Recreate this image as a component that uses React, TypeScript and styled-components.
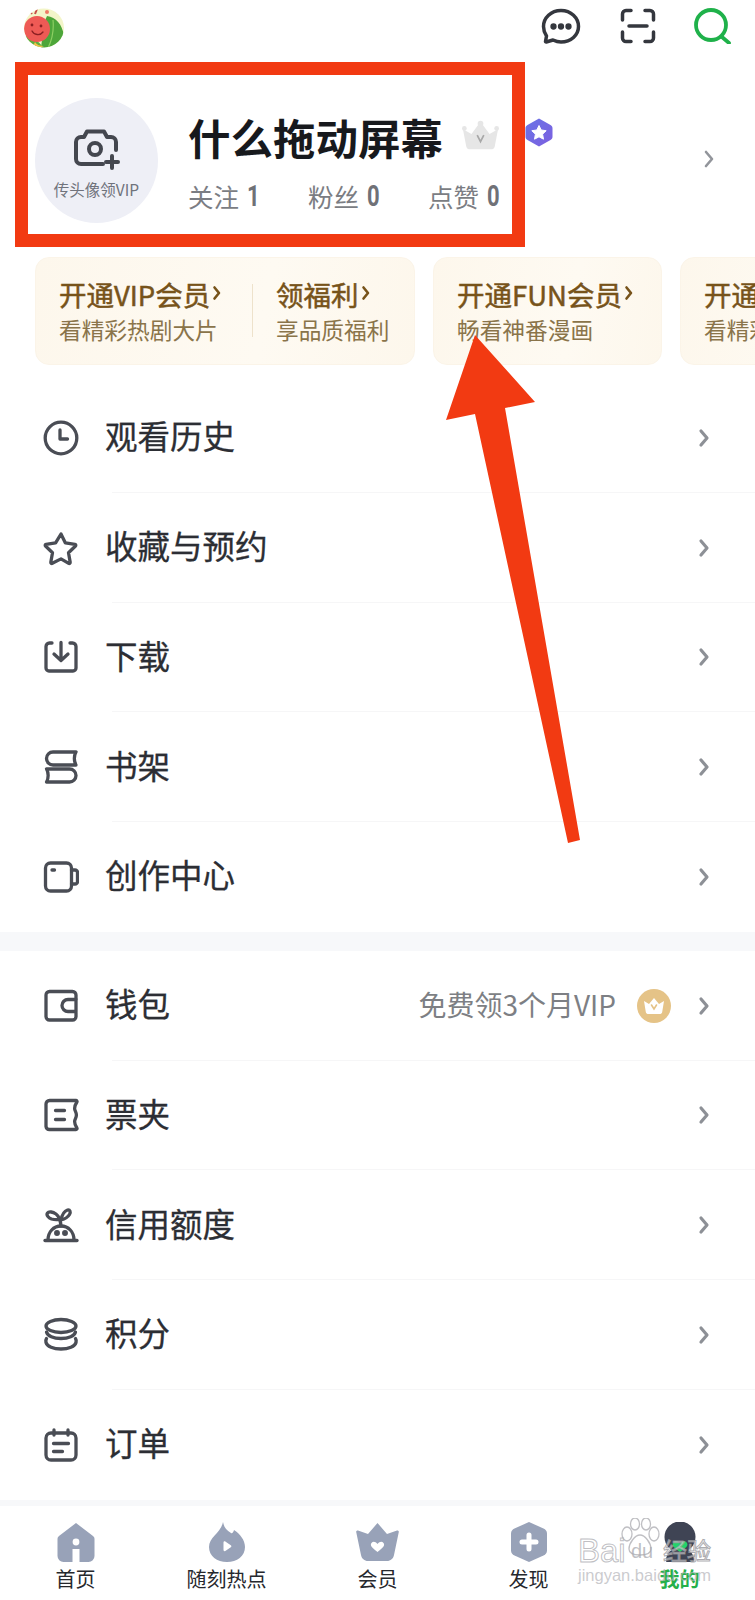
import React from "react";
import styled, { createGlobalStyle } from "styled-components";

const Global = createGlobalStyle`
  html, body { margin: 0; padding: 0; background: #fff; }
  * { box-sizing: border-box; }
`;

const Page = styled.div`
  position: relative;
  width: 755px;
  height: 1600px;
  overflow: hidden;
  background: #fff;
  font-family: "Noto Sans CJK SC", "Noto Sans", sans-serif;
  color: #2c2e34;
`;

const TopBar = styled.header`
  height: 62px;
  display: flex;
  align-items: flex-start;
  padding: 8px 23px 0 23px;
`;
const TopIcons = styled.div`
  margin-left: auto;
  display: flex;
  align-items: center;
  gap: 38.5px;
`;

const Profile = styled.section`
  height: 185px;
  display: flex;
  align-items: flex-start;
  padding: 36px 40px 0 35px;
`;
const AvatarUpload = styled.div`
  width: 123px;
  height: 125px;
  flex: none;
  border-radius: 50%;
  background: #eeeff6;
  display: flex;
  flex-direction: column;
  align-items: center;
  padding-top: 31px;
`;
const UploadLabel = styled.span`
  font-size: 15.5px;
  line-height: 20px;
  margin-top: 8px;
  color: #70737c;
  white-space: nowrap;
`;
const Info = styled.div`
  margin-left: 30px;
  padding-top: 12px;
`;
const NameRow = styled.div`
  display: flex;
  align-items: center;
  height: 54px;
`;
const Name = styled.h1`
  margin: 0;
  font-size: 42.5px;
  line-height: 54px;
  font-weight: 700;
  color: #17191d;
  white-space: nowrap;
`;
const CrownWrap = styled.span`
  display: flex;
  margin: -4px 0 0 19px;
`;
const BadgeWrap = styled.span`
  display: flex;
  margin: -9px 0 0 26px;
`;
const Stats = styled.div`
  display: flex;
  margin-top: 14px;
`;
const Stat = styled.div`
  width: 120px;
  display: flex;
  align-items: center;
  font-size: 25.5px;
  line-height: 36px;
  color: #7b7d83;
  white-space: nowrap;
`;
const StatNum = styled.b`
  display: inline-block;
  margin-left: 8px;
  font-family: "Roboto", sans-serif;
  font-size: 29px;
  font-weight: 700;
  color: #6f7177;
  transform: scaleX(0.76);
  transform-origin: left center;
`;
const ProfileChevron = styled.span`
  margin-left: auto;
  align-self: flex-start;
  margin-top: 50px;
  display: flex;
`;

const CardStrip = styled.section`
  display: flex;
  gap: 18px;
  margin-top: 10px;
  padding-left: 35px;
  height: 108px;
  overflow: hidden;
`;
const Card = styled.div`
  flex: none;
  display: flex;
  height: 108px;
  border-radius: 14px;
  background: linear-gradient(100deg, #fdf7ec 0%, #fefaf2 60%, #fdf7ec 100%);
  border: 1px solid #fbf4e8;
`;
const CardPart = styled.div<{ $w: number; $divider?: boolean }>`
  width: ${(p) => p.$w}px;
  padding: 18px 0 0 23px;
  position: relative;
  ${(p) =>
    p.$divider
      ? `&::after { content: ""; position: absolute; right: 0; top: 26px; height: 53px; width: 1px; background: #eee2cb; }`
      : ""}
`;
const CardTitle = styled.div`
  display: flex;
  align-items: center;
  font-size: 27.5px;
  line-height: 36px;
  font-weight: 400;
  color: #77531a;
  white-space: nowrap;
  -webkit-text-stroke: 0.5px #77531a;
`;
const CardSub = styled.div`
  font-size: 22.7px;
  line-height: 32px;
  margin-top: 2px;
  color: #8a744a;
  white-space: nowrap;
`;

const Band = styled.div<{ $h: number }>`
  height: ${(p) => p.$h}px;
  background: #f7f8fa;
`;
const List = styled.section<{ $top?: number }>`
  margin-top: ${(p) => p.$top ?? 0}px;
`;
const Row = styled.div`
  position: relative;
  height: 109.75px;
  display: flex;
  align-items: center;
  padding: 0 45px 0 43px;
  &:not(:last-child)::after {
    content: "";
    position: absolute;
    left: 112px;
    right: 0;
    bottom: 0;
    height: 1px;
    background: #f6f6f7;
  }
`;
const RowIcon = styled.span`
  width: 36px;
  height: 36px;
  flex: none;
  display: flex;
  color: #4a4d55;
`;
const RowLabel = styled.span`
  margin-left: 26px;
  padding-bottom: 5px;
  font-size: 32.5px;
  line-height: 44px;
  color: #2c2e34;
  -webkit-text-stroke: 0.3px #2c2e34;
`;
const RowRight = styled.div`
  margin-left: auto;
  display: flex;
  align-items: center;
`;
const RowNote = styled.span`
  font-size: 28px;
  line-height: 40px;
  padding-bottom: 4px;
  color: #7d7f84;
  margin-right: 21px;
  white-space: nowrap;
`;
const RowChevronBox = styled.span`
  display: flex;
`;
const GoldGap = styled.span`
  display: flex;
  margin-right: 27px;
`;

const TabBar = styled.nav`
  height: 95px;
  display: grid;
  grid-template-columns: repeat(5, 151px);
`;
const Tab = styled.div`
  display: flex;
  flex-direction: column;
  align-items: center;
  padding-top: 15px;
`;
const TabIcon = styled.span`
  height: 42px;
  display: flex;
  align-items: center;
  justify-content: center;
`;
const TabLabel = styled.span<{ $active?: boolean }>`
  margin-top: 4px;
  font-size: 20px;
  line-height: 24px;
  color: ${(p) => (p.$active ? "#25b04a" : "#26282d")};
  font-weight: ${(p) => (p.$active ? 700 : 400)};
`;

const Frame = styled.div`
  position: absolute;
  left: 15px;
  top: 62px;
  width: 510px;
  height: 185px;
  border-style: solid;
  border-color: #f23a12;
  border-width: 13px;
  pointer-events: none;
`;
const ArrowLayer = styled.svg`
  position: absolute;
  left: 0;
  top: 0;
  pointer-events: none;
`;
const Watermark = styled.div`
  position: absolute;
  left: 578px;
  top: 1518px;
  width: 140px;
  height: 72px;
  pointer-events: none;
  font-family: "Liberation Sans", "Noto Sans CJK SC", sans-serif;
`;
const WmBai = styled.span`
  position: absolute;
  left: 0;
  top: 16px;
  font-size: 33px;
  line-height: 34px;
  color: rgba(255, 255, 255, 0.55);
  -webkit-text-stroke: 1px rgba(170, 170, 175, 0.75);
`;
const WmDu = styled.span`
  position: absolute;
  left: 53px;
  top: 23px;
  font-size: 20px;
  line-height: 20px;
  color: rgba(170, 170, 175, 0.75);
`;
const WmCn = styled.span`
  position: absolute;
  left: 85px;
  top: 17px;
  font-family: "Noto Sans CJK SC", sans-serif;
  font-size: 24px;
  line-height: 30px;
  color: rgba(255, 255, 255, 0.5);
  -webkit-text-stroke: 1px rgba(150, 150, 155, 0.8);
  white-space: nowrap;
`;
const WmUrl = styled.span`
  position: absolute;
  left: 0;
  top: 47px;
  font-size: 16.5px;
  line-height: 20px;
  color: rgba(180, 180, 185, 0.7);
  white-space: nowrap;
`;

const stroke = {
  fill: "none",
  stroke: "currentColor",
  strokeWidth: 3.3,
  strokeLinecap: "round" as const,
  strokeLinejoin: "round" as const,
};

const Ico = ({ children }: { children: React.ReactNode }) => (
  <svg width="36" height="36" viewBox="0 0 36 36" {...stroke}>
    {children}
  </svg>
);

const Clock = () => (
  <Ico>
    <circle cx="18" cy="18" r="15.8" />
    <path d="M17 10v9h7.5" />
  </Ico>
);
const Star = () => (
  <Ico>
    <path d="M18 4l4.4 8.9 9.6 1.4a1 1 0 0 1 .5 1.7l-7 6.7 1.7 9.600a1 1 0 0 1-1.500 1L18 28.900l-8.700 4.400a1 1 0 0 1-1.500-1l1.700-9.600-7-6.700a1 1 0 0 1 .5-1.700l9.600-1.400z" />
  </Ico>
);
const Download = () => (
  <Ico>
    <path d="M9 4H6.500A3.500 3.500 0 0 0 3 7.500V29a3 3 0 0 0 3 3h24a3 3 0 0 0 3-3V7.500A3.500 3.500 0 0 0 29.500 4H27" />
    <path d="M18 3.500V21M11 15l7 6.500 7-6.500" />
  </Ico>
);
const Shelf = () => (
  <Ico>
    <path d="M33 3H10a6.500 6.500 0 0 0 0 13h23c-2.200-3.600-2.200-9.400 0-13z" />
    <path d="M3.500 20H26.500a6.500 6.500 0 0 1 0 13H3.500c2.200-3.600 2.200-9.400 0-13z" />
  </Ico>
);
const Video = () => (
  <Ico>
    <rect x="2.500" y="4" width="26" height="28" rx="5" />
    <path d="M28.500 11h3.500a2.500 2.500 0 0 1 2.500 2.500v9a2.500 2.500 0 0 1-2.500 2.500h-3.500" />
    <path d="M9 11h2.500" />
  </Ico>
);
const Wallet = () => (
  <Ico>
    <path d="M33 11V7a3.500 3.500 0 0 0-3.500-3.500h-23A3.500 3.500 0 0 0 3 7v21.500A3.500 3.500 0 0 0 6.500 32h23a3.500 3.500 0 0 0 3.500-3.500V25" />
    <path d="M33 11.500H25a6 6 0 0 0 0 12h8z" />
  </Ico>
);
const Ticket = () => (
  <Ico>
    <path d="M6.500 3.500h26.500c.8 0 1.300.8.9 1.500-1.500 2.300-2.300 3.800-2.300 6.500 0 2 1.800 3.500 1.800 6.500s-1.800 4.500-1.800 6.500c0 2.700.8 4.200 2.300 6.500.4.700-.1 1.500-.9 1.500H6.500A3.500 3.500 0 0 1 3 29.500V7a3.500 3.500 0 0 1 3.500-3.500z" />
    <path d="M12.500 13.500h9M12.500 22.500h9" />
  </Ico>
);
const Sprout = () => (
  <Ico>
    <path d="M2 33.500h32" />
    <path d="M5 33c0-8 5.500-14 13-14s13 6 13 14" />
    <path d="M18 19c-.5-5-1-9-5-12-3-2-7-3-8.500-1-1.500 2 1 5 4 6 3.500 1 6 1 9.500 0" />
    <path d="M18 13c1-5 3.500-9 6.500-10 2.500-.5 3.500 2 2 4.500-1.500 2.500-4.500 4.500-8.500 5.500" />
    <circle cx="14" cy="26" r="1.300" fill="currentColor" />
    <circle cx="22" cy="26" r="1.300" fill="currentColor" />
  </Ico>
);
const Coins = () => (
  <Ico>
    <ellipse cx="18" cy="9" rx="15" ry="6.500" />
    <path d="M3.500 15c1 4 7 6.500 14.500 6.500S31.500 19 32.500 15M3.500 21.500C2.500 23 3 25 3 25.500 4 29.500 10.500 32 18 32s14-2.500 15-6.500c0-.5.500-2.500-.5-4" />
  </Ico>
);
const Order = () => (
  <Ico>
    <rect x="3" y="6" width="30" height="27" rx="5" />
    <path d="M11 3v5M25 3v5M10.500 16.500h15M10.500 24.500h9" />
  </Ico>
);

const Chevron = ({ color = "#8d9096", w = 3.2, h = 20 }: { color?: string; w?: number; h?: number }) => (
  <svg width="12" height={h} viewBox="0 0 12 20" fill="none" stroke={color} strokeWidth={w} strokeLinecap="round" strokeLinejoin="round">
    <path d="M3 3l6 7-6 7" />
  </svg>
);
const ArrowMark = styled.svg`
  margin-left: 2px;
  flex: none;
`;
const TitleArrow = () => (
  <ArrowMark width="10" height="20" viewBox="0 0 10 20" fill="none" stroke="#77531a" strokeWidth="2.600" strokeLinecap="round" strokeLinejoin="round">
    <path d="M2.500 3.500L7 9l-4.500 5.500" />
  </ArrowMark>
);

const AppAvatar = () => (
  <svg width="42" height="40" viewBox="0 0 42 40">
    <defs>
      <clipPath id="av">
        <ellipse cx="21" cy="20" rx="20" ry="19.500" />
      </clipPath>
    </defs>
    <g clipPath="url(#av)">
      <rect width="42" height="40" fill="#f3f5c9" />
      <path d="M24 8c12 2 18 12 18 32H18C20 26 20 16 24 8z" fill="#4da63a" />
      <path d="M30 12c1 10 0 18-5 28" stroke="#8ccf62" strokeWidth="1.200" fill="none" />
      <path d="M0 28c8 0 16 4 20 12H0z" fill="#5dae3e" />
      <ellipse cx="14" cy="21" rx="13" ry="13" fill="#ee5a55" />
      <path d="M9 23c2 4 8 5 11 1" stroke="#8c1f22" strokeWidth="1.300" fill="none" strokeLinecap="round" />
      <circle cx="9" cy="17" r="1.400" fill="#8c1f22" />
      <circle cx="18" cy="18" r="1.400" fill="#8c1f22" />
      <path d="M6 2l3 4M14 1l-2 5" stroke="#c7504a" strokeWidth="2" />
      <circle cx="24" cy="4" r="2" fill="#ee7a66" />
      <path d="M12 34c2 3 5 4 9 4l-5 2H9z" fill="#f1c24b" />
    </g>
  </svg>
);

const TopMessage = () => (
  <svg width="40" height="36" viewBox="0 0 40 36" fill="none" stroke="#34373e" strokeWidth="3.500" strokeLinecap="round" strokeLinejoin="round">
    <path d="M20 2.500C10 2.500 2.500 9.800 2.500 18.500c0 3.500 1 6.500 3 9.500L4.500 33.500c0 .4.300.6.700.5L12 32c2.500 1.200 5 2 8 2 10 0 17.500-7 17.500-15.500S30 2.500 20 2.500z" />
    <circle cx="12.500" cy="18.500" r="1.400" fill="#34373e" />
    <circle cx="20" cy="18.500" r="1.400" fill="#34373e" />
    <circle cx="27.500" cy="18.500" r="1.400" fill="#34373e" />
  </svg>
);
const TopScan = () => (
  <svg width="36" height="36" viewBox="0 0 36 36" fill="none" stroke="#34373e" strokeWidth="3.500" strokeLinecap="round" strokeLinejoin="round">
    <path d="M11 2.500H6A3.500 3.500 0 0 0 2.500 6v6M25 2.500h5A3.500 3.500 0 0 1 33.500 6v6M11 33.500H6A3.500 3.500 0 0 1 2.500 30v-6M25 33.500h5a3.500 3.500 0 0 0 3.500-3.500v-6M9 18h18" />
  </svg>
);
const TopSearch = () => (
  <svg width="38" height="36" viewBox="0 0 38 36" fill="none" stroke="#1fb14a" strokeWidth="3.800" strokeLinecap="round">
    <ellipse cx="17" cy="17" rx="15" ry="15" />
    <path d="M28 29l7 6" />
  </svg>
);

const Camera = () => (
  <svg width="48" height="42" viewBox="0 0 48 42" fill="none" stroke="#44474f" strokeWidth="4" strokeLinecap="round" strokeLinejoin="round">
    <path d="M43 21V13a5 5 0 0 0-5-5h-4l-3-5.500H14L11 8H8a5 5 0 0 0-5 5v17a5 5 0 0 0 5 5h22" />
    <circle cx="22" cy="20" r="6" />
    <path d="M39 27v12M33 33h12" />
  </svg>
);
const GreyCrown = () => (
  <svg width="37" height="31" viewBox="0 0 39 31">
    <path d="M1 9l9 5 9.500-13L29 14l9-5-3.500 18c-.4 2-2 3-4 3H8.500c-2 0-3.600-1-4-3z" fill="#e6e6e6" />
    <circle cx="2.500" cy="8" r="2.500" fill="#e6e6e6" />
    <circle cx="36.500" cy="8" r="2.500" fill="#e6e6e6" />
    <circle cx="19.500" cy="3" r="3" fill="#e6e6e6" />
    <path d="M16 15l3.500 7 3.500-7" fill="none" stroke="#a8a8a8" strokeWidth="1.800" />
  </svg>
);
const LevelBadge = () => (
  <svg width="28" height="29" viewBox="0 0 28 29">
    <defs>
      <linearGradient id="lv" x1="0" y1="0" x2="1" y2="1">
        <stop offset="0" stopColor="#6a74e6" />
        <stop offset="1" stopColor="#7c5fe0" />
      </linearGradient>
    </defs>
    <path d="M14 0.500l11.500 6.500c1.500.8 2 1.800 2 3.500v8c0 1.700-.5 2.700-2 3.500L14 28.500 2.500 22C1 21.200.5 20.200.5 18.500v-8C.5 8.800 1 7.800 2.500 7z" fill="url(#lv)" />
    <path d="M14 7.500l2.200 4.500 5 .7-3.600 3.500.9 5-4.500-2.400-4.500 2.400.9-5-3.600-3.500 5-.7z" fill="#fff" stroke="#fff" strokeWidth="1" strokeLinejoin="round" />
  </svg>
);
const GoldCrown = () => (
  <svg width="34" height="34" viewBox="0 0 34 34">
    <circle cx="17" cy="17" r="17" fill="#e5c387" />
    <path d="M7 12l5 3 5-6 5 6 5-3-1.800 11c-.3 1.500-1.200 2-2.700 2H11.500c-1.500 0-2.400-.5-2.700-2z" fill="#fff" />
    <path d="M14.500 16l2.500 4 2.500-4" fill="none" stroke="#e5c387" strokeWidth="1.600" strokeLinecap="round" />
  </svg>
);

const tabFill = "#98a2b8";
const TabHome = () => (
  <svg width="38" height="40" viewBox="0 0 38 40">
    <path d="M19 1l17 13c1 .8 1.500 1.800 1.500 3v17a6 6 0 0 1-6 6H22.500V27h-7v13H6.500a6 6 0 0 1-6-6V17c0-1.200.5-2.200 1.500-3z" fill={tabFill} />
    <circle cx="19" cy="20" r="3.400" fill="#fff" />
  </svg>
);
const TabFlame = () => (
  <svg width="36" height="40" viewBox="0 0 36 40">
    <path d="M14 0c1 5 3 8 8 11 1.200.8 2.500-1 3-3C31 12 36 18 36 25c0 9-8 15-18 15S0 34 0 25C0 15 12 11 14 0z" fill={tabFill} />
    <path d="M14.500 20.500c0-1 1-1.500 1.800-1l5.500 3.800c.8.500.8 1.500 0 2l-5.500 3.800c-.8.500-1.800 0-1.800-1z" fill="#fff" />
  </svg>
);
const TabCrown = () => (
  <svg width="43" height="38" viewBox="0 0 43 38">
    <path d="M21.500 0L31 11l10-3.500c1-.3 2 .5 1.800 1.500L38 32c-.6 3.500-3.500 6-7 6H12c-3.500 0-6.400-2.500-7-6L.2 9C0 8 1 7.200 2 7.500L12 11z" fill={tabFill} />
    <path d="M15.500 20c1.500-2 4-1.500 6 1 2-2.500 4.500-3 6-1 1.500 2 .5 4-6 9-6.500-5-7.500-7-6-9z" fill="#fff" />
  </svg>
);
const TabPlus = () => (
  <svg width="36" height="40" viewBox="0 0 36 40">
    <path d="M18 0l14.500 6.500c2 .9 3.500 2.500 3.500 5v17c0 2.500-1.500 4.100-3.500 5L18 40 3.500 33.500C1.500 32.600 0 31 0 28.500v-17c0-2.500 1.500-4.100 3.500-5z" fill={tabFill} />
    <path d="M18 13v14M11 20h14" stroke="#fff" strokeWidth="5" strokeLinecap="round" />
  </svg>
);
const TabMine = () => (
  <svg width="32" height="40" viewBox="0 0 32 40">
    <circle cx="16" cy="15" r="15.500" fill="#3f4454" />
    <path d="M2 39c0-9 6-13 14-13s14 4 14 13c0 .5-.5 1-1 1H3c-.5 0-1-.500-1-1z" fill="#3f4454" />
    <path d="M9 21c1.500-2.500 4.500-2 7 .5 2.500-2.500 5.500-3 7-.5 1.500 2.500-1 5-7 9-6-4-8.500-6.500-7-9z" fill="#22d36a" />
  </svg>
);

const PawSvg = styled.svg`
  position: absolute;
  left: 41px;
  top: 0;
`;
const BaiduPaw = () => (
  <PawSvg width="42" height="38" viewBox="0 0 42 38" fill="none" stroke="rgba(170,170,175,.75)" strokeWidth="1.300">
    <ellipse cx="8" cy="16" rx="5" ry="7" />
    <ellipse cx="16" cy="6" rx="4.500" ry="6" />
    <ellipse cx="27" cy="6" rx="4.500" ry="6" />
    <ellipse cx="35" cy="16" rx="5" ry="7" />
    <path d="M21 17c5 0 11 8 11 14 0 4-4 6-11 6s-11-2-11-6c0-6 6-14 11-14z" />
  </PawSvg>
);

type Item = { label: string; icon: React.ReactNode; note?: string };
const listOne: Item[] = [
  { label: "观看历史", icon: <Clock /> },
  { label: "收藏与预约", icon: <Star /> },
  { label: "下载", icon: <Download /> },
  { label: "书架", icon: <Shelf /> },
  { label: "创作中心", icon: <Video /> },
];
const listTwo: Item[] = [
  { label: "钱包", icon: <Wallet />, note: "免费领3个月VIP" },
  { label: "票夹", icon: <Ticket /> },
  { label: "信用额度", icon: <Sprout /> },
  { label: "积分", icon: <Coins /> },
  { label: "订单", icon: <Order /> },
];

const tabs = [
  { label: "首页", icon: <TabHome /> },
  { label: "随刻热点", icon: <TabFlame /> },
  { label: "会员", icon: <TabCrown /> },
  { label: "发现", icon: <TabPlus /> },
  { label: "我的", icon: <TabMine />, active: true },
];

const MenuRow = ({ item }: { item: Item }) => (
  <Row>
    <RowIcon>{item.icon}</RowIcon>
    <RowLabel>{item.label}</RowLabel>
    <RowRight>
      {item.note && (
        <>
          <RowNote>{item.note}</RowNote>
          <GoldGap>
            <GoldCrown />
          </GoldGap>
        </>
      )}
      <RowChevronBox>
        <Chevron />
      </RowChevronBox>
    </RowRight>
  </Row>
);

export default function App() {
  return (
    <Page>
      <Global />
      <TopBar>
        <AppAvatar />
        <TopIcons>
          <TopMessage />
          <TopScan />
          <TopSearch />
        </TopIcons>
      </TopBar>

      <Profile>
        <AvatarUpload>
          <Camera />
          <UploadLabel>传头像领VIP</UploadLabel>
        </AvatarUpload>
        <Info>
          <NameRow>
            <Name>什么拖动屏幕</Name>
            <CrownWrap>
              <GreyCrown />
            </CrownWrap>
            <BadgeWrap>
              <LevelBadge />
            </BadgeWrap>
          </NameRow>
          <Stats>
            <Stat>
              关注<StatNum>1</StatNum>
            </Stat>
            <Stat>
              粉丝<StatNum>0</StatNum>
            </Stat>
            <Stat>
              点赞<StatNum>0</StatNum>
            </Stat>
          </Stats>
        </Info>
        <ProfileChevron>
          <Chevron w={2.6} h={22} color="#92959b" />
        </ProfileChevron>
      </Profile>

      <CardStrip>
        <Card>
          <CardPart $w={217} $divider>
            <CardTitle>
              开通VIP会员
              <TitleArrow />
            </CardTitle>
            <CardSub>看精彩热剧大片</CardSub>
          </CardPart>
          <CardPart $w={161}>
            <CardTitle>
              领福利
              <TitleArrow />
            </CardTitle>
            <CardSub>享品质福利</CardSub>
          </CardPart>
        </Card>
        <Card>
          <CardPart $w={227}>
            <CardTitle>
              开通FUN会员
              <TitleArrow />
            </CardTitle>
            <CardSub>畅看神番漫画</CardSub>
          </CardPart>
        </Card>
        <Card>
          <CardPart $w={218}>
            <CardTitle>
              开通VIP会员
              <TitleArrow />
            </CardTitle>
            <CardSub>看精彩热剧大片</CardSub>
          </CardPart>
        </Card>
      </CardStrip>

      <List $top={18}>
        {listOne.map((i) => (
          <MenuRow key={i.label} item={i} />
        ))}
      </List>
      <Band $h={19} />
      <List>
        {listTwo.map((i) => (
          <MenuRow key={i.label} item={i} />
        ))}
      </List>
      <Band $h={6} />

      <TabBar>
        {tabs.map((t) => (
          <Tab key={t.label}>
            <TabIcon>{t.icon}</TabIcon>
            <TabLabel $active={t.active}>{t.label}</TabLabel>
          </Tab>
        ))}
      </TabBar>

      <Frame />
      <ArrowLayer width="755" height="1600" viewBox="0 0 755 1600">
        <path d="M475 335L535 402 505 408 580 840 568 843 475 414 446 420z" fill="#f23a12" />
      </ArrowLayer>
      <Watermark>
        <BaiduPaw />
        <WmBai>Bai</WmBai>
        <WmDu>du</WmDu>
        <WmCn>经验</WmCn>
        <WmUrl>jingyan.baidu.com</WmUrl>
      </Watermark>
    </Page>
  );
}
